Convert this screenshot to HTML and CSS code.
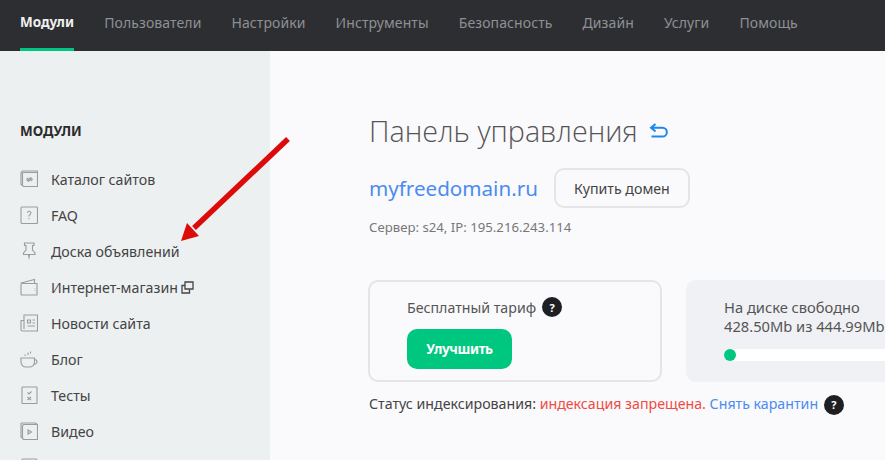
FILE: index.html
```html
<!DOCTYPE html>
<html lang="ru">
<head>
<meta charset="utf-8">
<title>Панель управления</title>
<link rel="stylesheet" href="styles.css">
</head>
<body>
<header class="topbar">
  <nav class="tabs">
    <a class="tab active">Модули</a>
    <a class="tab">Пользователи</a>
    <a class="tab">Настройки</a>
    <a class="tab">Инструменты</a>
    <a class="tab">Безопасность</a>
    <a class="tab">Дизайн</a>
    <a class="tab">Услуги</a>
    <a class="tab">Помощь</a>
  </nav>
</header>
<div class="layout">
  <aside class="sidebar">
    <h2 class="side-title">МОДУЛИ</h2>
    <ul class="side-list">
      <li class="side-item">
        <svg class="ico" viewBox="0 0 18 18"><path d="M2.500 15.500 1 14.500V2.500L2.500 1H17.500V16.500H3.500L2.500 15.500V3L3.500 2.500H17.500"/><path d="M8 10 10 8a1.500 1.500 0 0 1 2 2L11 11M11 9 9 11a1.500 1.500 0 0 1-2-2L8 8"/></svg>
        <span>Каталог сайтов</span>
      </li>
      <li class="side-item">
        <svg class="ico" viewBox="0 0 18 18"><rect x="1" y="1" width="16.500" height="16.500" rx="1"/><path d="M7.500 7a1.700 1.700 0 1 1 2.500 1.500C9.300 9 9 9.300 9 10.500M9 12v1.200"/></svg>
        <span>FAQ</span>
      </li>
      <li class="side-item">
        <svg class="ico" viewBox="0 0 18 18"><path d="M4.500 1H14V3.500H12.500V8L15 11V12.500H3.500V11L6 8V3.500H4.500Z"/><path class="ico-fill" d="M7.800 12.500 9 18 10.200 12.500Z"/></svg>
        <span>Доска объявлений</span>
      </li>
      <li class="side-item">
        <svg class="ico" viewBox="0 0 18 18"><path d="M1 6V16a1 1 0 0 0 1 1H17V5.500H2.500a1.500 1.500 0 0 1-1.500-.500L14.500 1.500V5.500M15 10v.5M15 12v.5"/></svg>
        <span>Интернет-магазин</span>
        <svg class="ext" viewBox="0 0 13 13"><path d="M4 8V1H12V8H4Z"/><path d="M4 4.500H1V12H8.500V8.500"/></svg>
      </li>
      <li class="side-item">
        <svg class="ico" viewBox="0 0 18 18"><path d="M4 15V1H17.500V17H2.500A1.500 1.500 0 0 1 1 15.500V6.500H4"/><path d="M7.500 6H10.500V9H7.500ZM12.500 6H15M12.500 9H15M7.500 12H15"/></svg>
        <span>Новости сайта</span>
      </li>
      <li class="side-item">
        <svg class="ico" viewBox="0 0 18 18"><path d="M1 8H14.500V12a5 5 0 0 1-5 5H6a5 5 0 0 1-5-5ZM14.500 9.500a2.500 2.500 0 0 1 2.500 2.300a2.500 2.500 0 0 1-3 2.300M5 6V4.500M8 5V2.500M10.500 3.500V1.500"/></svg>
        <span>Блог</span>
      </li>
      <li class="side-item">
        <svg class="ico" viewBox="0 0 18 18"><rect x="2" y="1" width="15" height="16.500" rx=".5"/><path d="M7.500 6.500 9 8 11.500 5.500M7.500 11 11 14M11 11 7.500 14"/></svg>
        <span>Тесты</span>
      </li>
      <li class="side-item">
        <svg class="ico" viewBox="0 0 18 18"><path d="M2.500 16 1 15V1.500L2 1H15.500L17.500 2.500V17.500H3.500L2.500 16.500V3.500L3.500 2.500H17.500"/><path d="M8 8V12L11.500 10Z"/></svg>
        <span>Видео</span>
      </li>
      <li class="side-item">
        <svg class="ico" viewBox="0 0 18 18"><rect x="2" y="1" width="15" height="16.500" rx="1"/></svg>
      </li>
    </ul>
  </aside>
  <main class="content">
    <div class="title-row">
      <h1 class="title">Панель управления</h1>
      <svg class="back" viewBox="0 0 20 18"><path d="M6.500 2 2 5.800 6.500 9.500M2 5.800H13.500a4.300 4.300 0 0 1 0 8.700H2.500"/></svg>
    </div>
    <div class="domain-row">
      <a class="domain">myfreedomain.ru</a>
      <button class="btn-outline">Купить домен</button>
    </div>
    <p class="server">Сервер: s24, IP: 195.216.243.114</p>
    <div class="cards">
      <section class="card card-plan">
        <div class="plan-line"><span>Бесплатный тариф</span><span class="help">?</span></div>
        <button class="btn-green">Улучшить</button>
      </section>
      <section class="card card-disk">
        <div class="disk-text">На диске свободно<br>428.50Mb из 444.99Mb</div>
        <div class="progress"><div class="progress-fill"></div></div>
      </section>
    </div>
    <p class="status">Статус индексирования: <span class="bad">индексация запрещена.</span> <a class="link">Снять карантин</a> <span class="help status-help">?</span></p>
  </main>
</div>
<svg class="arrow" viewBox="0 0 130 125"><path d="M118 14 24 103" class="arrow-line"/><path d="M11 116 17 98 29 111Z" class="arrow-head"/></svg>
</body>
</html>
```
FILE: styles.css
```css
* { box-sizing: border-box; }
html, body { margin: 0; height: 460px; overflow: hidden; }
body { font-family: "Noto Sans", "Open Sans", sans-serif; color: #333; background: #fafafc; position: relative; }
.topbar { height: 51px; background: #2d2e32; padding-left: 20px; }
.tabs { display: flex; gap: 30px; height: 51px; }
.tab { display: block; height: 51px; line-height: 45px; font-size: 14px; letter-spacing: .1px; color: #8f9094; border-bottom: 3px solid transparent; }
.tab.active { color: #eee; font-weight: 700; font-size: 13.500px; letter-spacing: 0; border-bottom-color: #00c77f; }
.layout { display: flex; height: 409px; overflow: hidden; }
.sidebar { width: 270px; flex: none; background: #edf0f1; padding: 70px 0 0 20px; }
.side-title { margin: 0 0 20px; font-size: 13.500px; line-height: 20px; font-weight: 700; color: #2b2b2b; }
.side-list { list-style: none; margin: 0; padding: 0; }
.side-item { display: flex; align-items: center; height: 36px; font-size: 14.200px; color: #444; }
.ico { width: 18px; height: 18px; margin-right: 13px; fill: none; stroke: #9a9d9f; stroke-width: 1.100; flex: none; }
.ico-fill { fill: #9a9d9f; stroke: none; }
.ext { width: 13px; height: 13px; margin-left: 3px; fill: none; stroke: #444; stroke-width: 1.300; }
.content { padding: 60px 0 0 99px; flex: none; width: 615px; }
.title-row { display: flex; align-items: center; height: 40px; }
.title { margin: 0; font-family: "Open Sans", sans-serif; font-size: 28.700px; font-weight: 300; color: #555; line-height: 40px; }
.back { width: 20px; height: 18px; margin-left: 11px; fill: none; stroke: #1e86f0; stroke-width: 2; }
.domain-row { display: flex; align-items: center; gap: 16px; margin-top: 17px; }
.domain { font-size: 20.600px; color: #4a8cf0; }
.btn-outline { height: 40px; width: 136px; padding: 0; border: 2px solid #e5e5e7; border-radius: 10px; background: transparent; font: inherit; font-size: 14.200px; color: #444; }
.server { margin: 9px 0 0; font-size: 13.200px; line-height: 20px; color: #777; }
.cards { display: flex; gap: 24px; margin-top: 43px; margin-left: -1px; }
.card { height: 102px; border-radius: 10px; flex: none; }
.card-plan { width: 294px; border: 2px solid #e5e5e7; padding: 14px 0 0 37px; }
.plan-line { display: flex; align-items: center; gap: 6px; font-size: 14.200px; color: #555; height: 22px; }
.help { display: inline-flex; width: 20px; height: 20px; border-radius: 50%; background: #1e1f22; color: #fff; font-size: 11px; font-weight: 700; align-items: center; justify-content: center; vertical-align: middle; }
.btn-green { display: block; margin-top: 11px; width: 105px; height: 40px; padding: 0; border: 0; border-radius: 10px; background: #00c77f; color: #fff; font: inherit; font-size: 13.500px; font-weight: 700; letter-spacing: -.4px; }
.card-disk { width: 294px; background: #f0f1f5; padding: 18px 0 0 38px; }
.disk-text { font-size: 14.700px; line-height: 19px; color: #555; white-space: nowrap; }
.progress { height: 12px; width: 220px; margin-top: 13px; background: #fff; border-radius: 6px; }
.progress-fill { width: 12px; height: 12px; border-radius: 50%; background: #00c77f; }
.status { margin: 11px 0 0; font-size: 14.200px; line-height: 22px; color: #444; white-space: pre; }
.bad { color: #f04a44; }
.link { color: #4a8cf0; }
.status-help { margin-left: 2px; }
.arrow { position: absolute; left: 170px; top: 125px; width: 130px; height: 125px; }
.arrow-line { stroke: #dd0a0a; stroke-width: 5.500; fill: none; }
.arrow-head { fill: #dd0a0a; }
```
